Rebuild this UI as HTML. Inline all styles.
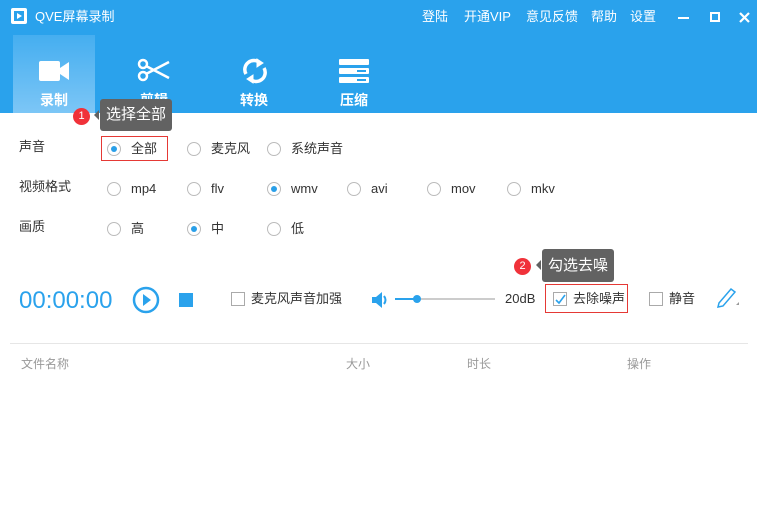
<!DOCTYPE html>
<html><head><meta charset="utf-8"><style>
*{margin:0;padding:0;box-sizing:border-box}
body{width:757px;height:505px;background:#fff;font-family:"Liberation Sans","Noto Sans CJK SC",sans-serif;position:relative;overflow:hidden;font-size:13px;color:#333;line-height:16px}
.a{position:absolute;white-space:nowrap;line-height:16px}
.hdr{position:absolute;left:0;top:0;width:757px;height:113px;background:#2aa2ec}
.w{color:#fff}
.tab{position:absolute;top:35px;width:82px;height:78px}
.r{position:absolute;width:14px;height:14px;border:1px solid #bbb;border-radius:50%}
.r.on::after{content:"";position:absolute;left:3px;top:3px;width:6px;height:6px;border-radius:50%;background:#2a9fe8}
.cb{position:absolute;width:14px;height:14px;border:1px solid #aaa;background:#fff}
.tip{position:absolute;background:#626262;color:#fff;font-size:15px;border-radius:3px;padding:0 6px;line-height:32px;height:32px}
.tip::before{content:"";position:absolute;left:-6px;top:11px;border:5px solid transparent;border-right-color:#626262;border-left:0}
.badge{position:absolute;width:17px;height:17px;border-radius:50%;background:#f0323a;color:#fff;font-size:11px;text-align:center;line-height:17px}
.g{color:#999;font-size:12px}
.tl{font-size:14px;font-weight:bold;color:#fff}
</style></head><body>
<div class="hdr"></div>
<svg class="a" style="left:10px;top:7px" width="18" height="18"><rect x="1" y="1" width="16" height="16" rx="2" fill="#fff"/><rect x="4" y="4" width="10" height="10" fill="#2aa2ec"/><path d="M7 6 L12 9 L7 12Z" fill="#fff"/></svg>
<div class="a w" style="left:35px;top:9px">QVE屏幕录制</div>
<div class="a w" style="left:422px;top:9px">登陆</div>
<div class="a w" style="left:464px;top:9px">开通VIP</div>
<div class="a w" style="left:526px;top:9px">意见反馈</div>
<div class="a w" style="left:591px;top:9px">帮助</div>
<div class="a w" style="left:630px;top:9px">设置</div>
<div class="a" style="left:678px;top:17px;width:11px;height:2px;background:#fff"></div>
<div class="a" style="left:710px;top:12px;width:10px;height:10px;border:2px solid #fff"></div>
<svg class="a" style="left:739px;top:12px" width="11" height="11"><path d="M1 1 L10 10 M10 1 L1 10" stroke="#fff" stroke-width="2.2"/></svg>
<div class="tab" style="left:13px;background:linear-gradient(#45aef0,#7cc6f6)"></div>
<svg class="a" style="left:39px;top:60px" width="32" height="22"><rect x="0" y="1" width="21" height="20" rx="2" fill="#fff"/><path d="M21 8 L30 2 V20 L21 14Z" fill="#fff"/></svg>
<div class="a tl" style="left:40px;top:92px">录制</div>
<svg class="a" style="left:137px;top:58px" width="34" height="24" fill="none" stroke="#fff" stroke-width="2.5"><circle cx="6" cy="6" r="4"/><circle cx="6" cy="18" r="4"/><path d="M9 8 L32 20 M9 16 L32 4"/></svg>
<div class="a tl" style="left:140px;top:92px">剪辑</div>
<svg class="a" style="left:241px;top:57px" width="28" height="28" fill="none" stroke="#fff" stroke-width="3.5"><path d="M5 17 A9 9 0 0 1 19 6"/><path d="M23 11 A9 9 0 0 1 9 22"/><path d="M16 2 L22 6 L16 10Z M12 18 L6 22 L12 26Z" fill="#fff" stroke-width="1"/></svg>
<div class="a tl" style="left:240px;top:92px">转换</div>
<svg class="a" style="left:339px;top:59px" width="30" height="24"><rect x="0" y="0" width="30" height="6" rx="1" fill="#fff"/><rect x="0" y="9" width="30" height="6" rx="1" fill="#fff"/><rect x="0" y="18" width="30" height="6" rx="1" fill="#fff"/><rect x="18" y="11" width="9" height="2" fill="#2aa2ec"/><rect x="18" y="20" width="9" height="2" fill="#2aa2ec"/></svg>
<div class="a tl" style="left:340px;top:92px">压缩</div>

<div class="badge" style="left:73px;top:108px">1</div>
<div class="tip" style="left:100px;top:99px">选择全部</div>

<div class="a" style="left:19px;top:139px">声音</div>
<div class="a" style="left:101px;top:136px;width:67px;height:25px;border:1px solid #e53935"></div>
<div class="r on" style="left:107px;top:142px"></div><div class="a" style="left:131px;top:141px">全部</div>
<div class="r" style="left:187px;top:142px"></div><div class="a" style="left:211px;top:141px">麦克风</div>
<div class="r" style="left:267px;top:142px"></div><div class="a" style="left:291px;top:141px">系统声音</div>

<div class="a" style="left:19px;top:179px">视频格式</div>
<div class="r" style="left:107px;top:182px"></div><div class="a" style="left:131px;top:181px">mp4</div>
<div class="r" style="left:187px;top:182px"></div><div class="a" style="left:211px;top:181px">flv</div>
<div class="r on" style="left:267px;top:182px"></div><div class="a" style="left:291px;top:181px">wmv</div>
<div class="r" style="left:347px;top:182px"></div><div class="a" style="left:371px;top:181px">avi</div>
<div class="r" style="left:427px;top:182px"></div><div class="a" style="left:451px;top:181px">mov</div>
<div class="r" style="left:507px;top:182px"></div><div class="a" style="left:531px;top:181px">mkv</div>

<div class="a" style="left:19px;top:219px">画质</div>
<div class="r" style="left:107px;top:222px"></div><div class="a" style="left:131px;top:221px">高</div>
<div class="r on" style="left:187px;top:222px"></div><div class="a" style="left:211px;top:221px">中</div>
<div class="r" style="left:267px;top:222px"></div><div class="a" style="left:291px;top:221px">低</div>

<div class="badge" style="left:514px;top:258px">2</div>
<div class="tip" style="left:542px;top:249px;height:33px;line-height:33px">勾选去噪</div>

<div class="a" style="left:19px;top:288px;font-size:24px;line-height:26px;color:#2aa2ec">00:00:00</div>
<svg class="a" style="left:132px;top:286px" width="28" height="28"><circle cx="14" cy="14" r="12" fill="none" stroke="#2aa2ec" stroke-width="2.5"/><path d="M11 8 L19 14 L11 20Z" fill="#2aa2ec"/></svg>
<div class="a" style="left:179px;top:293px;width:14px;height:14px;background:#2aa2ec"></div>
<div class="cb" style="left:231px;top:292px"></div>
<div class="a" style="left:251px;top:291px">麦克风声音加强</div>
<svg class="a" style="left:371px;top:291px" width="18" height="18"><path d="M1 6 H5 L11 1 V17 L5 12 H1Z" fill="#2aa2ec"/><path d="M13 5 Q16 9 13 13" stroke="#2aa2ec" stroke-width="2" fill="none"/></svg>
<div class="a" style="left:395px;top:298px;width:100px;height:2px;background:#ccc"></div>
<div class="a" style="left:395px;top:298px;width:22px;height:2px;background:#2aa2ec"></div>
<div class="a" style="left:413px;top:295px;width:8px;height:8px;border-radius:50%;background:#2aa2ec"></div>
<div class="a" style="left:505px;top:291px">20dB</div>
<div class="a" style="left:545px;top:284px;width:83px;height:29px;border:1px solid #e53935"></div>
<div class="cb" style="left:553px;top:292px"></div>
<svg class="a" style="left:555px;top:294px" width="11" height="11"><path d="M1 6 L4 9 L10 1" stroke="#2aa2ec" stroke-width="1.6" fill="none"/></svg>
<div class="a" style="left:573px;top:291px">去除噪声</div>
<div class="cb" style="left:649px;top:292px"></div>
<div class="a" style="left:669px;top:291px">静音</div>
<svg class="a" style="left:716px;top:286px" width="24" height="22"><path d="M3 17 L15 3 L19 6 L7 20 L2 21Z" fill="none" stroke="#2aa2ec" stroke-width="1.5"/><path d="M20 19 L23 19 L23 16Z" fill="#999"/></svg>

<div class="a" style="left:10px;top:343px;width:738px;height:1px;background:#e6e6e6"></div>
<div class="a g" style="left:21px;top:356px">文件名称</div>
<div class="a g" style="left:346px;top:356px">大小</div>
<div class="a g" style="left:467px;top:356px">时长</div>
<div class="a g" style="left:627px;top:356px">操作</div>
</body></html>
